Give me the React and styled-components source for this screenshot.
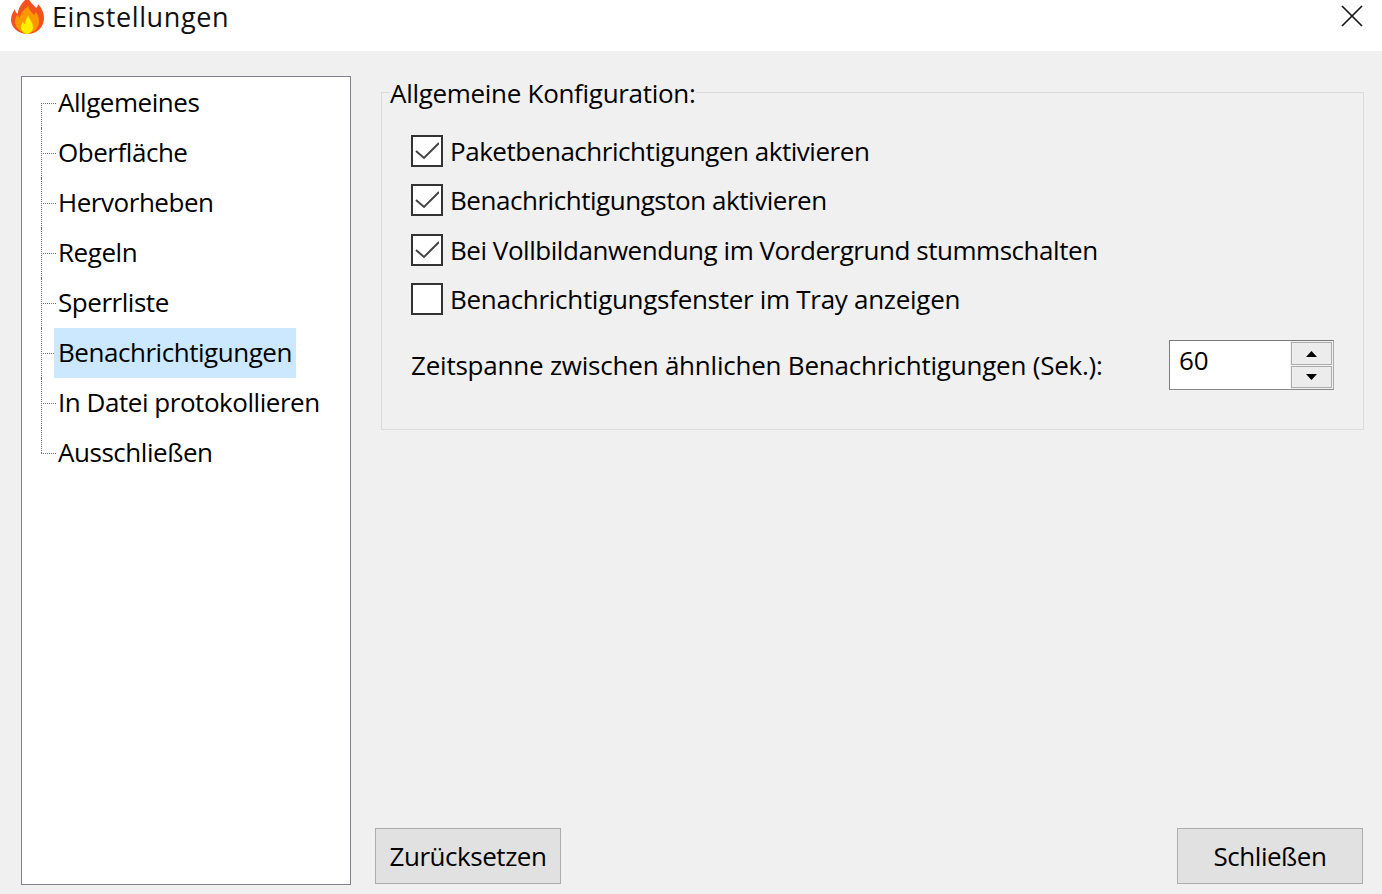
import React from "react";
import styled, { createGlobalStyle } from "styled-components";

const NAV_ITEMS = [
  "Allgemeines",
  "Oberfläche",
  "Hervorheben",
  "Regeln",
  "Sperrliste",
  "Benachrichtigungen",
  "In Datei protokollieren",
  "Ausschließen",
];

const OPTIONS = [
  { label: "Paketbenachrichtigungen aktivieren", checked: true },
  { label: "Benachrichtigungston aktivieren", checked: true },
  { label: "Bei Vollbildanwendung im Vordergrund stummschalten", checked: true },
  { label: "Benachrichtigungsfenster im Tray anzeigen", checked: false, tracking: "-0.29px" },
];

const GlobalStyle = createGlobalStyle`
  html, body {
    margin: 0;
    padding: 0;
    height: 100%;
    overflow: hidden;
    background: #f0f0f0;
  }
  body {
    font-family: "Open Sans", "Noto Sans", sans-serif;
    font-size: 26px;
    letter-spacing: -0.46px;
    color: #000;
  }
`;

const Window = styled.div`
  width: 1382px;
  height: 894px;
  display: flex;
  flex-direction: column;
  overflow: hidden;
`;

const TitleBar = styled.header`
  height: 51px;
  flex: none;
  background: #fff;
  display: flex;
  align-items: flex-start;
  padding-left: 9px;
`;

const TitleIcon = styled.svg`
  width: 36px;
  height: 36px;
  flex: none;
`;

const TitleText = styled.span`
  margin-left: 7px;
  font-size: 27px;
  line-height: 34px;
  letter-spacing: 0.62px;
  color: #111;
`;

const CloseButton = styled.button`
  margin-left: auto;
  margin-right: 19px;
  margin-top: 5px;
  width: 22px;
  height: 22px;
  padding: 0;
  border: 0;
  background: none;
  display: flex;
`;

const Body = styled.div`
  flex: 1;
  display: flex;
  padding: 25px 18px 9px 21px;
  min-height: 0;
`;

const Sidebar = styled.nav`
  width: 330px;
  flex: none;
  box-sizing: border-box;
  background: #fff;
  border: 1px solid #82828c;
  padding: 1px 0 0 32px;
`;

const Tree = styled.ul`
  list-style: none;
  margin: 0;
  padding: 0;
`;

const TreeItem = styled.li`
  position: relative;
  height: 50px;
  display: flex;
  align-items: center;

  &::before {
    content: "";
    position: absolute;
    left: -13px;
    top: 25px;
    width: 15px;
    border-top: 1px dotted #777;
  }
  &::after {
    content: "";
    position: absolute;
    left: -13px;
    top: ${(p) => (p.$first ? "25px" : "0")};
    height: ${(p) => (p.$last || p.$first ? "25px" : "50px")};
    border-left: 1px dotted #777;
  }
`;

const TreeLabel = styled.span`
  position: relative;
  z-index: 1;
  padding: 0 4px;
  height: 50px;
  line-height: 49px;
  white-space: nowrap;
  background: ${(p) => (p.$selected ? "#cce8ff" : "transparent")};
`;

const Content = styled.main`
  flex: 1;
  min-width: 0;
  display: flex;
  flex-direction: column;
  justify-content: space-between;
  padding-left: 24px;
`;

const Group = styled.fieldset`
  margin: 0 0 0 6px;
  padding: 0 29px;
  border: 1px solid #dcdcdc;
  min-width: 0;
  height: 354px;
  box-sizing: border-box;
`;

const GroupTitle = styled.legend`
  padding: 0;
  margin-left: -21px;
  line-height: 32px;
  letter-spacing: -0.3px;
  white-space: nowrap;
  transform: translateY(1px);
`;

const OptionList = styled.div`
  display: flex;
  flex-direction: column;
  gap: 17.5px;
  margin-top: 26.6px;
`;

const Option = styled.label`
  display: flex;
  align-items: center;
  height: 32px;
  white-space: nowrap;
  letter-spacing: ${(p) => p.$tracking || "inherit"};
`;

const CheckBox = styled.span`
  width: 32px;
  height: 32px;
  box-sizing: border-box;
  border: 2px solid #333;
  background: #fff;
  margin-right: 7px;
  flex: none;
  display: flex;
  align-items: center;
  justify-content: center;
`;

const SpinRow = styled.div`
  display: flex;
  align-items: center;
  justify-content: space-between;
  margin-top: 25.4px;
  white-space: nowrap;
`;

const SpinLabel = styled.span`
  letter-spacing: -0.22px;
`;

const SpinBox = styled.div`
  width: 165px;
  height: 50px;
  box-sizing: border-box;
  display: flex;
  background: #fff;
  border: 1px solid #7a7a7a;
  border-right: 1px solid #adadad;
  border-bottom-color: #8a8a8a;
`;

const SpinValue = styled.span`
  flex: 1;
  padding-left: 9px;
  line-height: 39px;
  letter-spacing: 0;
`;

const SpinButtons = styled.div`
  width: 43px;
  flex: none;
  background: #f0f0f0;
  display: flex;
  flex-direction: column;
  gap: 1px;
  padding: 1px;
  box-sizing: border-box;
`;

const SpinButton = styled.div`
  flex: 1;
  background: #ececec;
  border: 1px solid #adadad;
  display: flex;
  align-items: center;
  justify-content: center;
`;

const Footer = styled.footer`
  display: flex;
  justify-content: space-between;
  margin-right: 1px;
  margin-bottom: 1px;
`;

const ActionButton = styled.button`
  width: 186px;
  height: 56px;
  box-sizing: border-box;
  background: #e1e1e1;
  border: 1px solid #adadad;
  font: inherit;
  letter-spacing: inherit;
  color: #000;
  padding: 0;
`;

function FlameIcon() {
  return (
    <TitleIcon viewBox="0 0 36 36">
      <path
        fill="#f4511e"
        d="M19 -3c1 5 5 7 8 11 1-1 2-2 2-4 4 4 6 9 6 14 0 9-7 16-16.500 16S2 27 2 20c0-5 2-8 4-11 0 2 1 4 3 5C9 7 14 2 19 -3z"
      />
      <path
        fill="#ff9800"
        d="M19 6c1 4 4 6 6 9 1-1 1-2 2-3 2 3 3 6 3 9 0 7-5 12-11.500 12S6 28 6 22c0-3 1-6 3-8 0 2 1 3 2 4 0-5 4-8 8-12z"
      />
      <path
        fill="#ffee00"
        d="M19 15c1 4 5 7 5 12 0 4-3 7-6 7s-6-3-6-7c0-2 1-4 2-5 1 1 1 2 2 2 0-3 2-6 3-9z"
      />
    </TitleIcon>
  );
}

function Arrow({ up }) {
  return (
    <svg width="11" height="6" viewBox="0 0 11 6">
      <path fill="#000" d={up ? "M5.500 0L11 6H0z" : "M0 0h11L5.500 6z"} />
    </svg>
  );
}

function App() {
  return (
    <>
      <GlobalStyle />
      <Window>
        <TitleBar>
          <FlameIcon />
          <TitleText>Einstellungen</TitleText>
          <CloseButton aria-label="Schließen">
            <svg width="22" height="22" viewBox="0 0 22 22">
              <path stroke="#111" strokeWidth="1.6" d="M1 1l20 20M21 1L1 21" />
            </svg>
          </CloseButton>
        </TitleBar>
        <Body>
          <Sidebar>
            <Tree>
              {NAV_ITEMS.map((item, index) => (
                <TreeItem
                  key={item}
                  $first={index === 0}
                  $last={index === NAV_ITEMS.length - 1}
                >
                  <TreeLabel $selected={item === "Benachrichtigungen"}>{item}</TreeLabel>
                </TreeItem>
              ))}
            </Tree>
          </Sidebar>
          <Content>
            <Group>
              <GroupTitle>Allgemeine Konfiguration:</GroupTitle>
              <OptionList>
                {OPTIONS.map((option) => (
                  <Option key={option.label} $tracking={option.tracking}>
                    <CheckBox>
                      {option.checked && (
                        <svg width="24" height="20" viewBox="0 0 24 20">
                          <path
                            fill="none"
                            stroke="#444"
                            strokeWidth="2"
                            d="M1 10l8 7L24 2"
                          />
                        </svg>
                      )}
                    </CheckBox>
                    {option.label}
                  </Option>
                ))}
              </OptionList>
              <SpinRow>
                <SpinLabel>Zeitspanne zwischen ähnlichen Benachrichtigungen (Sek.):</SpinLabel>
                <SpinBox>
                  <SpinValue>60</SpinValue>
                  <SpinButtons>
                    <SpinButton>
                      <Arrow up />
                    </SpinButton>
                    <SpinButton>
                      <Arrow />
                    </SpinButton>
                  </SpinButtons>
                </SpinBox>
              </SpinRow>
            </Group>
            <Footer>
              <ActionButton>Zurücksetzen</ActionButton>
              <ActionButton>Schließen</ActionButton>
            </Footer>
          </Content>
        </Body>
      </Window>
    </>
  );
}

export default App;
